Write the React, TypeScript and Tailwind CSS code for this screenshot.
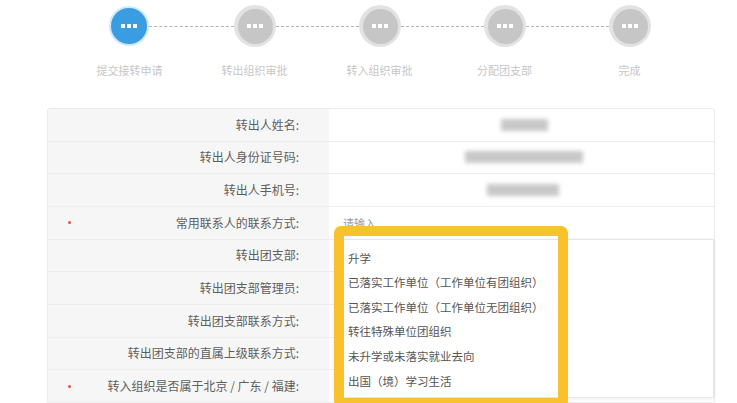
const steps = ["提交接转申请", "转出组织审批", "转入组织审批", "分配团支部", "完成"];

const rows = [
  { label: "转出人姓名:", blur: { ml: "ml-[172px]", w: "w-[47px]" } },
  { label: "转出人身份证号码:", blur: { ml: "ml-[136px]", w: "w-[118px]" } },
  { label: "转出人手机号:", blur: { ml: "ml-[158px]", w: "w-[72px]" } },
  { label: "常用联系人的联系方式:", required: true, placeholder: "请输入" },
  { label: "转出团支部:" },
  { label: "转出团支部管理员:" },
  { label: "转出团支部联系方式:" },
  { label: "转出团支部的直属上级联系方式:" },
  { label: "转入组织是否属于北京 / 广东 / 福建:", required: true },
];

const options = [
  "升学",
  "已落实工作单位（工作单位有团组织）",
  "已落实工作单位（工作单位无团组织）",
  "转往特殊单位团组织",
  "未升学或未落实就业去向",
  "出国（境）学习生活",
];

const Dots = () => (
  <div className="flex gap-[2px]">
    <span className="w-[4px] h-[4px] bg-white" />
    <span className="w-[4px] h-[4px] bg-white" />
    <span className="w-[4px] h-[4px] bg-white" />
  </div>
);

const App = () => {
  return (
    <div
      className="w-[737px] h-[403px] overflow-hidden bg-white"
      style={{ fontFamily: '"Noto Sans CJK SC", "Noto Sans", sans-serif' }}
    >
      {/* steps */}
      <div className="flex items-center ml-[109px] pt-[6px] h-[46px]">
        {steps.map((s, i) => (
          <div key={s} className="flex items-center">
            {i === 0 ? (
              <div className="w-[40px] h-[40px] rounded-full bg-[#cfe9fb] flex items-center justify-center">
                <div className="w-[36px] h-[36px] rounded-full bg-[#3b9de1] flex items-center justify-center">
                  <Dots />
                </div>
              </div>
            ) : (
              <div className="w-[42px] h-[42px] rounded-full bg-[#e2e2e2] flex items-center justify-center">
                <div className="w-[35px] h-[35px] rounded-full bg-[#c6c6c6] flex items-center justify-center">
                  <Dots />
                </div>
              </div>
            )}
            {i < steps.length - 1 && (
              <div className={`${i === 0 ? "w-[85px]" : "w-[83px]"} border-t border-dashed border-[#b5b5b5]`} />
            )}
          </div>
        ))}
      </div>
      <div className="flex ml-[67px] mt-[16px]">
        {steps.map((s) => (
          <div key={s} className="w-[125px] text-center text-[11px] leading-[16px] text-[#c6c6c6]">
            {s}
          </div>
        ))}
      </div>

      {/* form table */}
      <div className="relative ml-[47px] mt-[30px] w-[668px] border border-[#ebebeb] rounded-[3px]">
        {rows.map((r) => (
          <div key={r.label} className="flex h-[32.67px] border-b border-[#ededed] last:border-b-0">
            <div className="w-[281px] bg-[#f6f6f6] flex items-center pl-[20px] pr-[30px]">
              <span className={`w-[3px] h-[3px] rounded-full ${r.required ? "bg-[#d9534f]" : ""}`} />
              <span className="flex-1 text-right text-[12px] text-[#5e5e5e]">{r.label}</span>
            </div>
            <div className="flex-1 flex items-center">
              {r.blur && <div className={`${r.blur.ml} ${r.blur.w} h-[12px] bg-[#c8c8c8] blur-[2px]`} />}
              {r.placeholder && (
                <span className="ml-[14px] text-[11px] text-[#9a9a9a]">{r.placeholder}</span>
              )}
            </div>
          </div>
        ))}

        {/* dropdown */}
        <div className="absolute left-[286px] top-[130px] w-[380px] h-[159px] bg-white border border-[#e6e6e6] shadow-[0_1px_4px_rgba(0,0,0,0.08)] pt-[6px] pl-[13px]">
          {options.map((o) => (
            <div key={o} className="h-[24.6px] flex items-center text-[11.5px] text-[#555]">
              {o}
            </div>
          ))}
        </div>

        {/* highlight */}
        <div className="absolute left-[286px] top-[117px] w-[234px] h-[182px] border-[10px] border-[#f7c22d] rounded-[7px]" />
      </div>
    </div>
  );
};

export default App;
